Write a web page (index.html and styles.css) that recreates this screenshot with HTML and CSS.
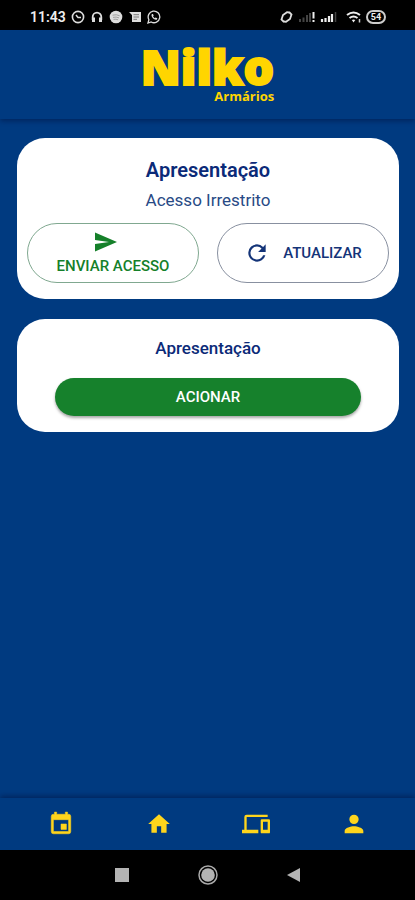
FILE: index.html
```html
<!DOCTYPE html>
<html lang="pt-BR">
<head>
<meta charset="utf-8">
<meta name="viewport" content="width=device-width, initial-scale=1">
<title>Nilko Armários</title>
<link rel="stylesheet" href="styles.css">
</head>
<body>
<div class="status">
  <div class="status-group">
    <span class="time">11:43</span>
    <svg width="14" height="14" viewBox="0 0 14 14"><circle cx="7" cy="7" r="5.6" fill="none" stroke="#ddd" stroke-width="1.6"/><path d="M5 5l2 2.500h3" fill="none" stroke="#ddd" stroke-width="1.500"/></svg>
    <svg width="14" height="14" viewBox="0 0 14 14"><path d="M2.700 10V7a4.300 4.300 0 018.600 0v3" fill="none" stroke="#ddd" stroke-width="1.800"/><path d="M2 7.500h3V12H2zM9 7.500h3V12H9z" fill="#ddd"/></svg>
    <svg width="14" height="14" viewBox="0 0 14 14"><circle cx="7" cy="7" r="6.300" fill="#ddd"/><path d="M3.500 5.200q4-1.200 7.200.6M4 7.400q3.200-.9 6 .5M4.500 9.400q2.500-.6 4.600.4" fill="none" stroke="#999" stroke-width=".9"/></svg>
    <svg width="14" height="14" viewBox="0 0 14 14"><path d="M1 2h12v10H4V5z" fill="#ddd"/><path d="M5.500 4.700h5.500M5.500 7h5.500M5.500 9.300h3.500" stroke="#777" stroke-width="1"/></svg>
    <svg width="14" height="14" viewBox="0 0 14 14"><path d="M1 13l.9-3.300A5.800 5.800 0 114.200 12z" fill="none" stroke="#ddd" stroke-width="1.300"/><path d="M5 4c-2 2 2.500 7 5 5.500l.3-1.200-1.700-.8-.8.8L6 6.500l.7-.8L6 4z" fill="#ddd"/></svg>
  </div>
  <div class="status-group status-right">
    <svg width="16" height="14" viewBox="0 0 16 14"><path d="M6 12L3.500 9.500 5 5 9 2.200l2 .3M11 2l2.500 2.500L12 9l-4 2.800-2-.3" fill="none" stroke="#ddd" stroke-width="1.800"/></svg>
    <svg width="18" height="14" viewBox="0 0 18 14"><path d="M2 9v3M5.500 7.500V12M9 5v7M12 3v9" stroke="#444" stroke-width="2"/><path d="M15.500 2v6.500M15.500 10v2" stroke="#eee" stroke-width="2"/></svg>
    <svg width="18" height="14" viewBox="0 0 18 14"><path d="M2 9v3M5.500 8v4M9 6v6M12 4v8" stroke="#eee" stroke-width="2.200"/><path d="M15.500 2v10" stroke="#444" stroke-width="1.500"/></svg>
    <svg class="wifi" width="16" height="14" viewBox="0 0 16 14"><path d="M1 5q6.500-5 13 0M3.500 8q4-3 8 0" fill="none" stroke="#eee" stroke-width="2"/><path d="M5.800 10L7.500 12.500 9.300 10q-1.700-1.200-3.500 0z" fill="#eee"/><path d="M13.500 9v3.500" stroke="#ccc" stroke-width="1.500"/></svg>
    <span class="battery">54</span>
  </div>
</div>

<header class="header">
  <div class="logo"><span class="logo-name">Nilko</span><span class="logo-sub">Armários</span></div>
</header>

<main class="main">
  <section class="card">
    <h1 class="title">Apresentação</h1>
    <p class="subtitle">Acesso Irrestrito</p>
    <div class="actions">
      <button class="outline outline-send" type="button">
        <svg width="26" height="22" viewBox="0 0 26 22"><path d="M2 1.500L24 11 2 20.500V13l14-2L2 9z" fill="currentColor"/></svg>
        <span>ENVIAR ACESSO</span>
      </button>
      <button class="outline outline-refresh" type="button">
        <svg width="26" height="26" viewBox="0 0 24 24"><path d="M17.650 6.350A7.950 7.950 0 0012 4a8 8 0 107.730 10h-2.080A6 6 0 1112 6c1.660 0 3.140.69 4.220 1.780L13 11h7V4z" fill="currentColor"/></svg>
        <span>ATUALIZAR</span>
      </button>
    </div>
  </section>
  <section class="card card-small">
    <h2 class="title title-small">Apresentação</h2>
    <button class="primary" type="button">ACIONAR</button>
  </section>
</main>

<nav class="tabs" aria-label="Principal">
  <a class="tab" href="#agenda" aria-label="Agenda"><svg width="26" height="26" viewBox="0 0 24 24"><path d="M17 12h-5v5h5zM16 1v2H8V1H6v2H5a2 2 0 00-2 2v14a2 2 0 002 2h14a2 2 0 002-2V5a2 2 0 00-2-2h-1V1zm3 18H5V8h14z" fill="currentColor" stroke="currentColor" stroke-width=".5"/></svg></a>
  <a class="tab" href="#inicio" aria-label="Início"><svg width="26" height="26" viewBox="0 0 24 24"><path d="M10 20v-6h4v6h5v-8h3L12 3 2 12h3v8z" fill="currentColor"/></svg></a>
  <a class="tab" href="#dispositivos" aria-label="Dispositivos"><svg width="28" height="28" viewBox="0 0 24 24"><path d="M4 6h18V4H4a2 2 0 00-2 2v11H0v3h14v-3H4zm19 2h-6a1 1 0 00-1 1v10a1 1 0 001 1h6a1 1 0 001-1V9a1 1 0 00-1-1zm-1 9h-4v-7h4z" fill="currentColor"/></svg></a>
  <a class="tab" href="#perfil" aria-label="Perfil"><svg width="28" height="28" viewBox="0 0 24 24"><path d="M12 12a4 4 0 100-8 4 4 0 000 8zm0 2c-2.670 0-8 1.340-8 4v2h16v-2c0-2.660-5.330-4-8-4z" fill="currentColor"/></svg></a>
</nav>

<div class="system">
  <button class="sys" type="button" aria-label="Recentes"><svg width="14" height="14" viewBox="0 0 14 14"><path d="M0 0h14v14H0z" fill="#b4b4b4"/></svg></button>
  <button class="sys" type="button" aria-label="Tela inicial"><svg width="20" height="20" viewBox="0 0 20 20"><circle cx="10" cy="10" r="9" fill="none" stroke="#aaa" stroke-width="1.500"/><circle cx="10" cy="10" r="6.800" fill="#b4b4b4"/></svg></button>
  <button class="sys" type="button" aria-label="Voltar"><svg width="14" height="16" viewBox="0 0 14 16"><path d="M13 1v14L0 8z" fill="#b4b4b4"/></svg></button>
</div>
</body>
</html>
```
FILE: styles.css
```css
* { box-sizing: border-box; }

body {
  margin: 0;
  min-height: 100vh;
  display: flex;
  flex-direction: column;
  background: #003a80;
  color: #0b2a78;
  font-family: Roboto, "Liberation Sans", sans-serif;
}

h1, h2, p { margin: 0; }
svg { display: block; flex: none; }
button { font: inherit; cursor: pointer; }

.status {
  height: 30px;
  padding: 4px 29px 0 30px;
  display: flex;
  align-items: center;
  justify-content: space-between;
  background: #000;
}
.status-group { display: flex; align-items: center; gap: 5px; }
.status-right { gap: 4px; }
.wifi { margin-left: 4px; }
.time {
  color: #eee;
  font-size: 14px;
  font-weight: 600;
  line-height: 16px;
}
.battery {
  width: 20px;
  border: 2px solid #ccc;
  border-radius: 7px;
  color: #eee;
  font-size: 9px;
  font-weight: 700;
  line-height: 10px;
  text-align: center;
}

.header {
  height: 89px;
  display: flex;
  justify-content: center;
  padding-top: 14px;
  box-shadow: 0 2px 5px rgba(0, 10, 50, 0.45);
}
.logo {
  display: flex;
  flex-direction: column;
  align-items: flex-end;
  color: #ffd500;
}
.logo-name {
  font-family: "Noto Sans", sans-serif;
  font-size: 48px;
  font-weight: 900;
  line-height: 45px;
  -webkit-text-stroke: 2px #ffd500;
}
.logo-sub {
  font-family: "Open Sans", "Noto Sans", sans-serif;
  font-size: 13px;
  font-weight: 700;
  line-height: 14px;
}

.main {
  flex: 1;
  display: flex;
  flex-direction: column;
  gap: 20px;
  padding: 19px 16px 19px 17px;
}
.card {
  padding: 20px 10px 16px;
  border-radius: 28px;
  background: #fff;
  text-align: center;
}
.title {
  font-size: 20px;
  font-weight: 600;
  line-height: 24px;
}
.subtitle {
  margin-top: 8px;
  color: #284a85;
  font-size: 17px;
  line-height: 20px;
}
.actions {
  margin-top: 13px;
  display: flex;
  gap: 18px;
}
.outline {
  flex: 1;
  height: 60px;
  padding: 0;
  display: flex;
  align-items: center;
  justify-content: center;
  border: 1px solid #8890a0;
  border-radius: 30px;
  background: #fff;
  font-size: 15px;
  font-weight: 500;
  line-height: 20px;
}
.outline-send {
  flex-direction: column;
  gap: 3px;
  border-color: #80a890;
  color: #15802a;
}
.outline-send svg { margin-right: 14px; }
.outline-refresh {
  gap: 13px;
  color: #143478;
}

.card-small { padding: 19px 38px 16px; }
.title-small {
  font-size: 17px;
  font-weight: 500;
  line-height: 20px;
}
.primary {
  width: 100%;
  height: 38px;
  margin-top: 20px;
  border: 0;
  border-radius: 19px;
  background: #16812c;
  color: #fff;
  font-size: 15px;
  font-weight: 500;
  box-shadow: 0 2px 3px rgba(0, 0, 0, 0.35);
}

.tabs {
  height: 52px;
  display: grid;
  grid-template-columns: repeat(4, 1fr);
  padding: 0 12px;
  box-shadow: 0 -2px 5px rgba(0, 10, 50, 0.45);
}
.tab {
  display: flex;
  align-items: center;
  justify-content: center;
  color: #ffd51c;
}

.system {
  height: 50px;
  display: grid;
  grid-template-columns: repeat(3, 86px);
  justify-content: center;
  background: #000;
}
.sys {
  padding: 0;
  display: flex;
  align-items: center;
  justify-content: center;
  border: 0;
  background: none;
}
```
